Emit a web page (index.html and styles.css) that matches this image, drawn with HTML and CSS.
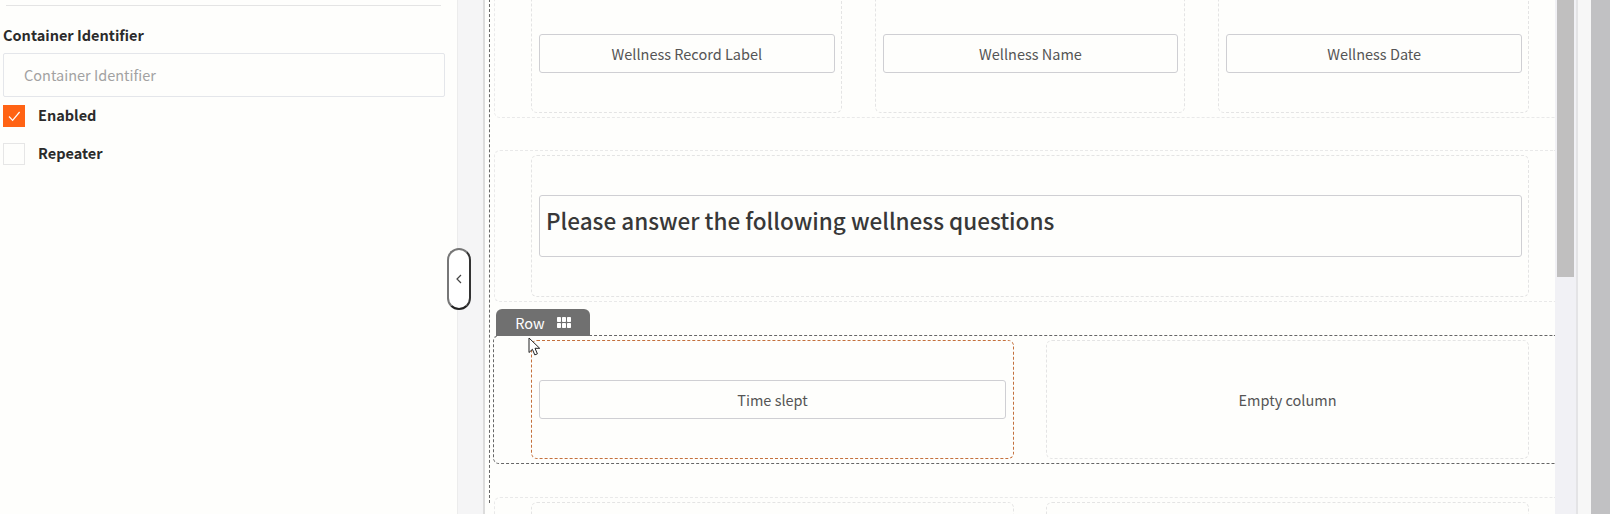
FILE: index.html
```html
<!DOCTYPE html>
<html lang="en">
<head>
<meta charset="utf-8">
<title>Form builder</title>
<link rel="stylesheet" href="styles.css">
</head>
<body>
<aside class="sidebar">
  <hr class="rule">
  <label class="field-label" for="cid">Container Identifier</label>
  <input class="text-input" id="cid" type="text" placeholder="Container Identifier">
  <div class="check-row">
    <span class="check check-on">
      <svg width="22" height="22" viewBox="0 0 22 22"><path d="M6 11.5l3.6 3.8L16.6 7" fill="none" stroke="#fff" stroke-width="1.2"/></svg>
    </span>
    <span class="check-label">Enabled</span>
  </div>
  <div class="check-row">
    <span class="check"></span>
    <span class="check-label">Repeater</span>
  </div>
</aside>
<div class="gutter"></div>
<button class="collapse" type="button" aria-label="Collapse">
  <svg width="8" height="12" viewBox="0 0 8 12"><path d="M6 2L2 6l4 4" fill="none" stroke="#444" stroke-width="1.2"/></svg>
</button>
<main class="canvas">
  <div class="page">
    <section class="row row-first cols-3">
      <div class="cell"><div class="control">Wellness Record Label</div></div>
      <div class="cell"><div class="control">Wellness Name</div></div>
      <div class="cell"><div class="control">Wellness Date</div></div>
    </section>
    <section class="row cols-1">
      <div class="cell cell-tall"><div class="control control-title">Please answer the following wellness questions</div></div>
    </section>
    <section class="row row-active cols-2">
      <div class="cell cell-active"><div class="control">Time slept</div></div>
      <div class="cell"><span class="empty">Empty column</span></div>
    </section>
    <section class="row cols-2">
      <div class="cell"></div>
      <div class="cell"></div>
    </section>
  </div>
</main>
<div class="row-tag">
  <span>Row</span>
  <svg width="14" height="11" viewBox="0 0 14 11" fill="#fff"><rect x="0" y="0" width="4" height="5" rx=".7"/><rect x="5" y="0" width="4" height="5" rx=".7"/><rect x="10" y="0" width="4" height="5" rx=".7"/><rect x="0" y="6" width="4" height="5" rx=".7"/><rect x="5" y="6" width="4" height="5" rx=".7"/><rect x="10" y="6" width="4" height="5" rx=".7"/></svg>
</div>
<svg class="pointer" width="14" height="20" viewBox="0 0 14 20"><path d="M1 1v14.5l3.4-3.2 2.4 5.6 2.6-1.1-2.4-5.5h4.7z" fill="#fff" stroke="#222" stroke-width="1"/></svg>
<div class="track"><div class="thumb"></div></div>
<div class="strip"></div>
<div class="outer-bar"></div>
</body>
</html>
```
FILE: styles.css
```css
* { box-sizing: border-box; }
html, body { height: 100%; }
body {
  margin: 0;
  height: 514px;
  display: flex;
  overflow: hidden;
  position: relative;
  background: #fefefc;
  color: #333;
  font-family: "Noto Sans CJK JP", "Noto Sans", sans-serif;
}
.sidebar {
  width: 458px;
  flex: none;
  padding: 5px 0 0 3px;
  border-right: 1px solid #ececec;
  background: #fefefc;
}
.rule {
  margin: 0 0 20px 3px;
  width: 435px;
  border: 0;
  border-top: 1px solid #e4e4e4;
}
.field-label {
  display: block;
  height: 18px;
  margin-bottom: 9px;
  font-size: 14.5px;
  line-height: 18px;
  font-weight: 700;
  color: #2b2b2b;
}
.text-input {
  display: block;
  width: 442px;
  height: 44px;
  padding: 0 0 2px 20px;
  border: 1px solid #e4e6ea;
  border-radius: 2px;
  background: #fefefc;
  font: 14.5px "Noto Sans CJK JP", sans-serif;
}
.text-input::placeholder { color: #a2a2a2; opacity: 1; }
.check-row {
  display: flex;
  align-items: center;
  gap: 13px;
  height: 22px;
  margin-top: 8px;
  margin-bottom: 16px;
}
.check {
  width: 22px;
  height: 22px;
  flex: none;
  border: 1px solid #e6e6e6;
}
.check-on {
  border: 0;
  background: #ff6314;
}
.check svg { display: block; }
.check-label {
  padding-bottom: 3px;
  font-size: 14.5px;
  font-weight: 700;
  color: #2b2b2b;
}
.gutter {
  width: 27px;
  flex: none;
  background: #f5f5f6;
  border-right: 2px solid #dcdcdc;
}
.collapse {
  position: absolute;
  left: 447px;
  top: 248px;
  width: 24px;
  height: 62px;
  padding: 0;
  display: flex;
  align-items: center;
  justify-content: center;
  border: 2px solid;
  border-color: #777 #333 #222 #777;
  border-radius: 12px;
  background: #fff;
}
.canvas {
  width: 1070px;
  flex: none;
  height: 514px;
  overflow: hidden;
  padding-left: 4px;
  background: #fefefc;
}
.page {
  height: 514px;
  padding-left: 4px;
  border-left: 1px dashed #666;
}
.row {
  display: grid;
  gap: 32px;
  margin-bottom: 33px;
  padding: 4px 26px 4px 36px;
  border: 1px dashed #e9e9e9;
  border-right: 0;
  border-radius: 6px 0 0 6px;
}
.row-first { margin-top: -11px; margin-bottom: 32px; }
.row-active {
  margin-left: -1px;
  padding-left: 37px;
  border-color: #666;
}
.cols-1 { grid-template-columns: 1fr; }
.cols-2 { grid-template-columns: 1fr 1fr; }
.cols-3 { grid-template-columns: 1fr 1fr 1fr; gap: 33px; }
.cell {
  height: 119px;
  padding: 0 7px;
  display: flex;
  align-items: center;
  justify-content: center;
  border: 1px dashed #e4e4e4;
  border-radius: 6px;
}
.cols-1 .cell, .cols-3 .cell { padding-right: 6px; }
.cell-tall { height: 142px; }
.cell-active { border-color: #c4703c; }
.control {
  width: 100%;
  height: 39px;
  display: flex;
  align-items: center;
  justify-content: center;
  padding-bottom: 1px;
  border: 1px solid #cfcfd3;
  border-radius: 3px;
  font-size: 14.5px;
  color: #555;
}
.control-title {
  height: 62px;
  justify-content: flex-start;
  padding: 0 0 12px 6px;
  font-size: 22.5px;
  font-weight: 500;
  color: #383838;
}
.empty {
  padding-bottom: 1px;
  font-size: 14.5px;
  color: #555;
}
.row-tag {
  position: absolute;
  left: 496px;
  top: 309px;
  width: 94px;
  height: 27px;
  display: flex;
  align-items: center;
  justify-content: center;
  gap: 12px;
  border-radius: 6px 6px 0 0;
  background: #707070;
  color: #fff;
  font-size: 14.5px;
}
.pointer {
  position: absolute;
  left: 528px;
  top: 337px;
}
.track {
  width: 21px;
  flex: none;
  padding: 0 2px;
  background: #f1f1f5;
}
.thumb {
  height: 277px;
  background: #c0bfbf;
}
.strip {
  width: 15px;
  flex: none;
  background: #f7f7f7;
  border-left: 2px solid #e4e4e6;
}
.outer-bar {
  width: 19px;
  flex: none;
  background: #c1c1c3;
}
```
